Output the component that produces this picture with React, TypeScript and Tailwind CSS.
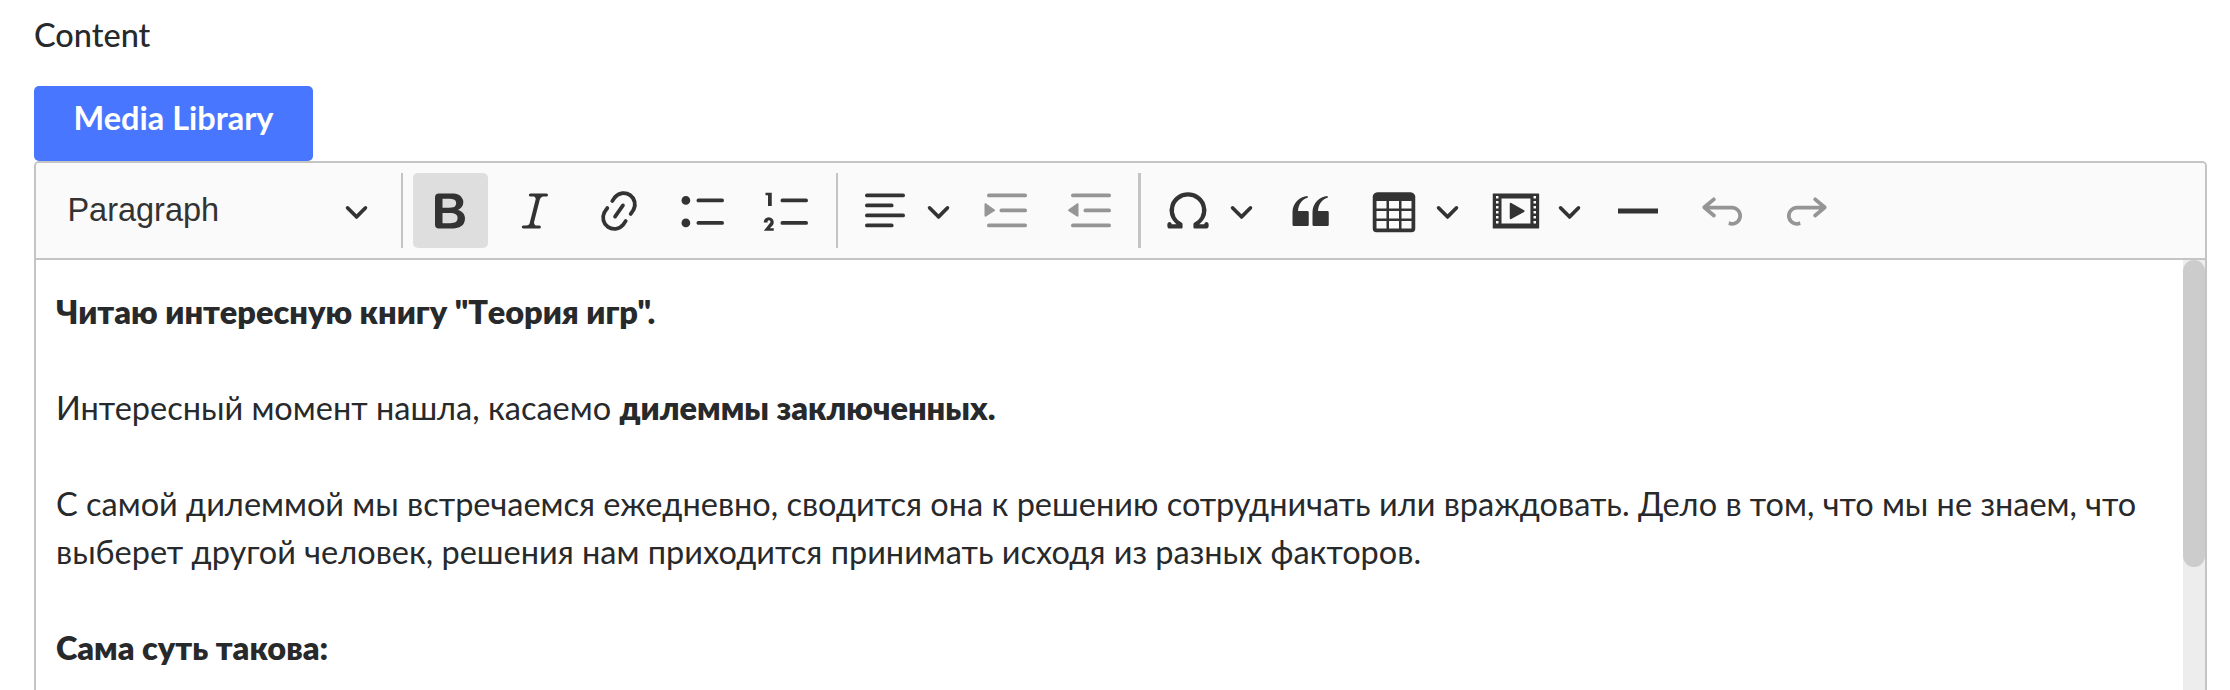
import type { ReactNode } from "react";

const ICONS = {
  bold: "M10.187 17H5.773c-.637 0-1.092-.138-1.364-.415-.273-.277-.409-.718-.409-1.323V4.738c0-.617.14-1.062.419-1.332.279-.27.73-.406 1.354-.406h4.68c.69 0 1.288.041 1.793.124.506.083.96.242 1.36.478.341.197.644.447.906.75a3.262 3.262 0 0 1 .808 2.162c0 1.401-.722 2.426-2.167 3.075C15.05 10.175 16 11.315 16 13.01a3.756 3.756 0 0 1-2.296 3.504 6.1 6.1 0 0 1-1.517.377c-.571.073-1.238.11-2 .11zm-.217-6.217H7v4.087h3.069c1.977 0 2.965-.69 2.965-2.072 0-.707-.256-1.22-.768-1.537-.512-.319-1.277-.478-2.296-.478zM7 5.13v3.619h2.606c.729 0 1.292-.067 1.69-.2a1.6 1.6 0 0 0 .91-.765c.165-.267.247-.566.247-.897 0-.707-.26-1.176-.778-1.409-.519-.232-1.31-.348-2.375-.348H7z",
  italic:
    "m9.586 14.633.021.004c-.036.335.095.655.393.962.082.083.173.15.274.201h1.474a.6.6 0 1 1 0 1.2H5.304a.6.6 0 0 1 0-1.2h1.15c.474-.07.809-.182 1.005-.334.157-.122.291-.32.404-.597l2.416-9.55a1.053 1.053 0 0 0-.281-.823 1.12 1.12 0 0 0-.442-.296H8.15a.6.6 0 0 1 0-1.2h6.443a.6.6 0 1 1 0 1.2h-1.195c-.376.056-.65.155-.823.296-.215.175-.423.439-.623.79l-2.366 9.347z",
  link: "m11.077 15 .991-1.416a.75.75 0 1 1 1.229.86l-1.148 1.64a.748.748 0 0 1-.217.206 5.251 5.251 0 0 1-8.503-5.955.741.741 0 0 1 .12-.274l1.147-1.639a.75.75 0 1 1 1.228.86L4.933 10.7l.006.003a3.75 3.75 0 0 0 6.132 4.294l.006.004zm5.494-5.335a.748.748 0 0 1-.12.274l-1.147 1.639a.75.75 0 1 1-1.228-.86l.86-1.23a3.75 3.75 0 0 0-6.144-4.301l-.86 1.229a.75.75 0 0 1-1.229-.86l1.148-1.64a.748.748 0 0 1 .217-.206 5.251 5.251 0 0 1 8.503 5.955zm-4.563-2.532a.75.75 0 0 1 .184 1.045l-3.155 4.505a.75.75 0 1 1-1.229-.86l3.155-4.506a.75.75 0 0 1 1.045-.184z",
  bulleted:
    "M7 5.75c0 .414.336.75.75.75h9.5a.75.75 0 1 0 0-1.5h-9.5a.75.75 0 0 0-.75.75zm-6 0C1 4.784 1.777 4 2.75 4c.966 0 1.75.777 1.75 1.75 0 .966-.777 1.75-1.75 1.75C1.784 7.5 1 6.723 1 5.75zm6 9c0 .414.336.75.75.75h9.5a.75.75 0 1 0 0-1.5h-9.5a.75.75 0 0 0-.75.75zm-6 0c0-.966.777-1.75 1.75-1.75.966 0 1.75.777 1.75 1.75 0 .966-.777 1.75-1.75 1.75-.966 0-1.75-.777-1.75-1.75z",
  numbered:
    "M7 5.75c0 .414.336.75.75.75h9.5a.75.75 0 1 0 0-1.5h-9.5a.75.75 0 0 0-.75.75zM3.5 3v5H2V3.7H1v-1h2.5V3zM.343 17.857l2.59-3.257H2.92a.6.6 0 1 0-1.04 0H.302a2 2 0 1 1 3.995 0h-.001c-.048.405-.16.734-.333.988-.175.254-.59.692-1.244 1.312H4.3v1h-4l.043-.043zM7 14.75a.75.75 0 0 1 .75-.75h9.5a.75.75 0 1 1 0 1.5h-9.5a.75.75 0 0 1-.75-.75z",
  alignLeft:
    "M2 3.75c0 .414.336.75.75.75h14.5a.75.75 0 1 0 0-1.5H2.75a.75.75 0 0 0-.75.75zm0 8c0 .414.336.75.75.75h14.5a.75.75 0 1 0 0-1.5H2.75a.75.75 0 0 0-.75.75zm0 4c0 .414.336.75.75.75h9.929a.75.75 0 1 0 0-1.5H2.75a.75.75 0 0 0-.75.75zm0-8c0 .414.336.75.75.75h9.929a.75.75 0 1 0 0-1.5H2.75a.75.75 0 0 0-.75.75z",
  indent:
    "M2 3.75c0 .414.336.75.75.75h14.5a.75.75 0 1 0 0-1.5H2.75a.75.75 0 0 0-.75.75zm5 6c0 .414.336.75.75.75h9.5a.75.75 0 1 0 0-1.5h-9.5a.75.75 0 0 0-.75.75zM2.75 16.5h14.5a.75.75 0 1 0 0-1.5H2.75a.75.75 0 1 0 0 1.5zM1.632 6.95 5.02 9.358a.4.4 0 0 1-.013.661l-3.39 2.207A.4.4 0 0 1 1 11.892V7.275a.4.4 0 0 1 .632-.326z",
  outdent:
    "M2 3.75c0 .414.336.75.75.75h14.5a.75.75 0 1 0 0-1.5H2.75a.75.75 0 0 0-.75.75zm5 6c0 .414.336.75.75.75h9.5a.75.75 0 1 0 0-1.5h-9.5a.75.75 0 0 0-.75.75zM2.75 16.5h14.5a.75.75 0 1 0 0-1.5H2.75a.75.75 0 1 0 0 1.5zM4.368 6.95.98 9.358a.4.4 0 0 0 .013.661l3.39 2.207A.4.4 0 0 0 5 11.892V7.275a.4.4 0 0 0-.632-.326z",
  omega:
    "M10 2.5a7.47 7.47 0 0 1 4.231 1.31 7.268 7.268 0 0 1 2.703 3.454 7.128 7.128 0 0 1 .199 4.353c-.39 1.436-1.475 2.72-2.633 3.677h2.013c0-.226.092-.443.254-.603a.876.876 0 0 1 1.229 0c.163.16.254.377.254.603v.853c0 .209-.078.41-.22.567a.873.873 0 0 1-.547.28l-.101.006h-4.695a.517.517 0 0 1-.516-.518v-1.265c0-.21.128-.398.317-.489a5.601 5.601 0 0 0 2.492-2.371 5.459 5.459 0 0 0 .552-3.693 5.53 5.53 0 0 0-1.955-3.2A5.71 5.71 0 0 0 10 4.206 5.708 5.708 0 0 0 6.419 5.46 5.527 5.527 0 0 0 4.46 8.663a5.457 5.457 0 0 0 .554 3.695 5.6 5.6 0 0 0 2.497 2.37.55.55 0 0 1 .317.49v1.264c0 .286-.23.518-.516.518H2.618a.877.877 0 0 1-.614-.25.845.845 0 0 1-.254-.603v-.853c0-.226.091-.443.254-.603a.876.876 0 0 1 1.228 0c.163.16.255.377.255.603h1.925c-1.158-.958-2.155-2.241-2.545-3.678a7.128 7.128 0 0 1 .199-4.352 7.268 7.268 0 0 1 2.703-3.455A7.475 7.475 0 0 1 10 2.5z",
  quote:
    "M3 10.423a6.5 6.5 0 0 1 6.056-6.408l.038.67C6.448 5.423 5.354 7.663 5.22 10H9c.552 0 .5.432.5.986v4.511c0 .554-.448.503-1 .503h-5c-.552 0-.5-.449-.5-1.003v-4.574zm8 0a6.5 6.5 0 0 1 6.056-6.408l.038.67c-2.646.739-3.74 2.979-3.873 5.315H17c.552 0 .5.432.5.986v4.511c0 .554-.448.503-1 .503h-5c-.552 0-.5-.449-.5-1.003v-4.574z",
  table:
    "M3 6v3h4V6H3zm0 4v3h4v-3H3zm0 4v3h4v-3H3zm5 3h4v-3H8v3zm5 0h4v-3h-4v3zm4-4v-3h-4v3h4zm0-4V6h-4v3h4zm1.5 8a1.5 1.5 0 0 1-1.5 1.5H3A1.5 1.5 0 0 1 1.5 17V4c.222-.863 1.068-1.5 2-1.5h13c.932 0 1.778.637 2 1.5v13zM12 13v-3H8v3h4zm0-4V6H8v3h4z",
  media:
    "M18.68 3.03c.6 0 .59-.03.59.55v12.84c0 .59.01.56-.59.56H1.29c-.6 0-.59.03-.59-.56V3.58c0-.58-.01-.55.6-.55h17.38zM15.77 15V5H4.2v10h11.57zM2 4v1h1V4H2zm0 2v1h1V6H2zm0 2v1h1V8H2zm0 2v1h1v-1H2zm0 2v1h1v-1H2zm0 2v1h1v-1H2zM17 4v1h1V4h-1zm0 2v1h1V6h-1zm0 2v1h1V8h-1zm0 2v1h1v-1h-1zm0 2v1h1v-1h-1zm0 2v1h1v-1h-1zM7.5 7.177a.4.4 0 0 1 .593-.351l5.133 2.824a.4.4 0 0 1 0 .7l-5.133 2.824a.4.4 0 0 1-.593-.35V7.176v.001z",
  rule: "M2 9h16v2H2z",
  undo: "m5.042 9.367 2.189 1.837a.75.75 0 0 1-.965 1.149l-3.788-3.18a.747.747 0 0 1-.21-.284.75.75 0 0 1 .17-.945L6.23 4.762a.75.75 0 1 1 .964 1.15L4.863 7.866h8.917A.75.75 0 0 1 14 7.9a4 4 0 1 1-1.477 7.718l.344-1.489a2.5 2.5 0 1 0 1.094-4.73l.008-.032H5.042z",
  redo: "m14.958 9.367-2.189 1.837a.75.75 0 0 0 .965 1.149l3.788-3.18a.747.747 0 0 0 .21-.284.75.75 0 0 0-.17-.945L13.77 4.762a.75.75 0 1 0-.964 1.15l2.331 1.955H6.22A.75.75 0 0 0 6 7.9a4 4 0 1 0 1.477 7.718l-.344-1.489A2.5 2.5 0 1 1 6.039 9.4l-.008-.032h8.927z",
};

type IconName = keyof typeof ICONS;

function Icon({ name }: { name: IconName }) {
  return (
    <svg viewBox="0 0 20 20" className="size-[50px] shrink-0 fill-current" aria-hidden="true">
      <path fillRule={name === "media" ? "evenodd" : "nonzero"} d={ICONS[name]} />
    </svg>
  );
}

function Arrow() {
  return (
    <svg viewBox="0 0 10 10" className="size-[25px] shrink-0 fill-current" aria-hidden="true">
      <path d="M.941 4.523a.75.75 0 1 1 1.06-1.06l3.006 3.005 3.005-3.005a.75.75 0 1 1 1.06 1.06l-3.549 3.55a.75.75 0 0 1-1.168-.136L.941 4.523z" />
    </svg>
  );
}

function Tool({ name, active, disabled }: { name: IconName; active?: boolean; disabled?: boolean }) {
  return (
    <button
      type="button"
      aria-label={name}
      className={`flex h-[75px] w-[75px] shrink-0 items-center justify-center rounded-[5px] ${
        active ? "bg-[#dedede]" : ""
      } ${disabled ? "opacity-50" : ""}`}
    >
      <Icon name={name} />
    </button>
  );
}

function DropdownTool({ name }: { name: IconName }) {
  return (
    <button
      type="button"
      aria-label={name}
      className="flex h-[75px] w-[112.5px] shrink-0 items-center gap-[16px] pl-[12.5px]"
    >
      <Icon name={name} />
      <Arrow />
    </button>
  );
}

function Separator() {
  return <span className="h-[75px] w-[2.5px] shrink-0 bg-[#c4c4c4]" />;
}

function Paragraph({ children }: { children: ReactNode }) {
  return <p className="mb-12">{children}</p>;
}

function Strong({ children }: { children: ReactNode }) {
  return <strong className="font-extrabold">{children}</strong>;
}

export default function App() {
  return (
    <div className="flex h-[690px] w-[2230px] flex-col overflow-hidden bg-white pl-[34px] pr-[23px] font-['Lato','Noto_Sans',sans-serif] text-[32.5px] text-[#27292b]">
      <div className="flex h-[86px] shrink-0 items-start pt-[11px]">
        <label className="text-[32.5px] font-medium leading-[48px]">Content</label>
      </div>
      <button
        type="button"
        className="flex h-[75px] w-[279px] shrink-0 justify-center rounded-[5px] bg-[#4876ff] pt-[8px] text-[32.5px] font-bold leading-[48px] text-white"
      >
        Media Library
      </button>
      <div className="flex min-h-0 flex-1 flex-col rounded-t-[5px] border-2 border-b-0 border-[#c4c4c4]">
        <div className="flex h-[97px] shrink-0 items-center gap-[9.45px] rounded-t-[3px] border-b-2 border-[#c4c4c4] bg-[#fafafa] pl-[9.4px] text-[#333]">
          <button
            type="button"
            className="flex h-[75px] w-[346.1px] shrink-0 items-center justify-between pl-[22px] pr-[22.5px] font-['Liberation_Sans',sans-serif] text-[32.5px]"
          >
            Paragraph
            <Arrow />
          </button>
          <Separator />
          <Tool name="bold" active />
          <Tool name="italic" />
          <Tool name="link" />
          <Tool name="bulleted" />
          <div className="mr-[0.5px] flex">
            <Tool name="numbered" />
          </div>
          <Separator />
          <DropdownTool name="alignLeft" />
          <Tool name="indent" disabled />
          <Tool name="outdent" disabled />
          <div className="mr-[0.5px] flex">
            <Separator />
          </div>
          <DropdownTool name="omega" />
          <div className="-mr-[0.7px] flex">
            <Tool name="quote" />
          </div>
          <DropdownTool name="table" />
          <DropdownTool name="media" />
          <Tool name="rule" />
          <Tool name="undo" disabled />
          <Tool name="redo" disabled />
        </div>
        <div className="flex min-h-0 flex-1">
          <div className="min-w-0 flex-1 overflow-hidden pl-[20px] pr-[18px] pt-[28px] leading-[48px]">
            <Paragraph>
              <Strong>
                Читаю интересную книгу "<span className="tracking-[-0.5px]">Т</span>еория игр".
              </Strong>
            </Paragraph>
            <Paragraph>
              Интересный момент нашла, касаемо <Strong>дилеммы заключенных.</Strong>
            </Paragraph>
            <Paragraph>
              С самой дилеммой мы встречаемся ежедневно, сводится она к решению сотрудничать или враждовать. Дело в том,
              что мы не знаем, что
              <br />
              выберет другой человек, решения нам приходится принимать исходя из разных факторов.
            </Paragraph>
            <Paragraph>
              <Strong>Сама суть такова:</Strong>
            </Paragraph>
          </div>
          <div className="w-[22px] shrink-0 bg-[#ededed]">
            <div className="h-[307px] rounded-full bg-[#ccc]" />
          </div>
        </div>
      </div>
    </div>
  );
}
